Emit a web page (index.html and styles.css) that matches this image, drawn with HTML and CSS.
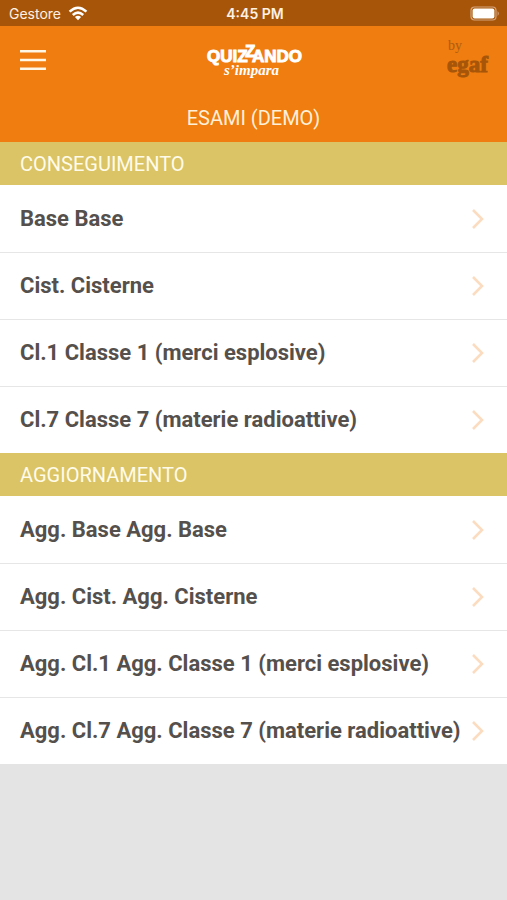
FILE: index.html
```html
<!DOCTYPE html>
<html lang="it">
<head>
<meta charset="utf-8">
<meta name="viewport" content="width=device-width, initial-scale=1">
<title>Quizzando - Esami (demo)</title>
<link rel="stylesheet" href="styles.css">
</head>
<body>
<svg class="defs" width="0" height="0" aria-hidden="true">
  <symbol id="chevron" viewBox="0 0 14 22"><path d="M2 2 L11 11 L2 20" fill="none" stroke="currentColor" stroke-width="2.6"/></symbol>
</svg>
<div class="status">
  <div class="carrier">
    <span>Gestore</span>
    <svg width="20" height="15" viewBox="0 0 20 15" aria-hidden="true">
      <g fill="none" stroke="#fff" stroke-width="2.5">
        <path d="M1.6 5.6 Q10 -2.2 18.4 5.6"/>
        <path d="M4.8 9 Q10 4.2 15.2 9"/>
      </g>
      <path d="M6.9 11 Q10 8.4 13.1 11 L10 14.2 Z" fill="#fff"/>
    </svg>
  </div>
  <span class="clock">4:45 PM</span>
  <svg class="battery" width="31" height="15" viewBox="0 0 31 15" aria-hidden="true">
    <rect x="1" y="1" width="25" height="13" rx="3.5" fill="none" stroke="#d6a47c" stroke-width="1.2"/>
    <rect x="2.6" y="2.6" width="21.8" height="9.8" rx="2" fill="#fff"/>
    <path d="M27.6 5 Q30 7.5 27.6 10 Z" fill="#d6a47c"/>
  </svg>
</div>
<header class="header">
  <div class="bar">
    <button class="menu" type="button" aria-label="Menu">
      <svg width="26" height="22" viewBox="0 0 26 22" aria-hidden="true"><path d="M0 2.3H26M0 11H26M0 19.7H26" stroke="#fff6e4" stroke-width="2.6"/></svg>
    </button>
    <svg class="logo" width="98" height="40" viewBox="0 0 98 40" role="img" aria-label="Quizzando s'impara">
      <g class="logo-name">
        <text x="1" y="22">QUIZ</text>
        <text x="39" y="17">Z</text>
        <text x="46" y="22">ANDO</text>
      </g>
      <text class="logo-tag" x="18" y="35">s’impara</text>
    </svg>
    <svg class="brand" width="42" height="44" viewBox="0 0 42 44" role="img" aria-label="by egaf">
      <text class="brand-by" x="1" y="12">by</text>
      <text class="brand-name" x="0" y="34">egaf</text>
    </svg>
  </div>
  <h1 class="title">ESAMI (DEMO)</h1>
</header>
<main>
  <section>
    <h2 class="group">CONSEGUIMENTO</h2>
    <ul class="list">
      <li><a class="row" href="#"><span>Base Base</span><svg class="chevron" aria-hidden="true"><use href="#chevron"/></svg></a></li>
      <li><a class="row" href="#"><span>Cist. Cisterne</span><svg class="chevron" aria-hidden="true"><use href="#chevron"/></svg></a></li>
      <li><a class="row" href="#"><span>Cl.1 Classe 1 (merci esplosive)</span><svg class="chevron" aria-hidden="true"><use href="#chevron"/></svg></a></li>
      <li><a class="row" href="#"><span>Cl.7 Classe 7 (materie radioattive)</span><svg class="chevron" aria-hidden="true"><use href="#chevron"/></svg></a></li>
    </ul>
  </section>
  <section>
    <h2 class="group">AGGIORNAMENTO</h2>
    <ul class="list">
      <li><a class="row" href="#"><span>Agg. Base Agg. Base</span><svg class="chevron" aria-hidden="true"><use href="#chevron"/></svg></a></li>
      <li><a class="row" href="#"><span>Agg. Cist. Agg. Cisterne</span><svg class="chevron" aria-hidden="true"><use href="#chevron"/></svg></a></li>
      <li><a class="row" href="#"><span>Agg. Cl.1 Agg. Classe 1 (merci esplosive)</span><svg class="chevron" aria-hidden="true"><use href="#chevron"/></svg></a></li>
      <li><a class="row" href="#"><span>Agg. Cl.7 Agg. Classe 7 (materie radioattive)</span><svg class="chevron" aria-hidden="true"><use href="#chevron"/></svg></a></li>
    </ul>
  </section>
</main>
</body>
</html>
```
FILE: styles.css
```css
* { box-sizing: border-box; }
body {
  margin: 0;
  background: #e4e4e4;
  font-family: Roboto, "Liberation Sans", sans-serif;
}
.defs { display: block; }
.status {
  display: grid;
  grid-template-columns: 1fr auto 1fr;
  align-items: center;
  height: 26px;
  padding: 1px 6px 0 9px;
  background: #a75609;
  color: #fdf1e4;
  font: 14px/20px Inter, sans-serif;
}
.carrier { display: flex; align-items: center; gap: 7px; }
.clock { font-weight: 600; }
.battery { justify-self: end; }
.header { background: #ef7d10; }
.bar {
  display: grid;
  grid-template-columns: 1fr auto 1fr;
  align-items: center;
  height: 67px;
  padding: 0 18px 0 20px;
}
.menu {
  display: flex;
  justify-self: start;
  padding: 0;
  border: 0;
  background: none;
}
.brand { justify-self: end; overflow: visible; }
.logo { overflow: visible; }
.logo-name {
  font: bold 17px "Liberation Sans", sans-serif;
  fill: #fff;
  stroke: #fff;
  stroke-width: 1px;
}
.logo-tag {
  font: italic bold 15px "Liberation Serif", serif;
  fill: #fff;
}
.brand-by { font: 14px "Liberation Serif", serif; fill: #ad5c10; }
.brand-name {
  font: bold 23px "Liberation Serif", serif;
  fill: #a75609;
  stroke: #a75609;
  stroke-width: 1px;
}
.title {
  height: 49px;
  margin: 0;
  color: #fff0d8;
  font-size: 20px;
  font-weight: 400;
  line-height: 51px;
  text-align: center;
}
.group {
  height: 43px;
  margin: 0;
  padding: 0 20px;
  background: #dac465;
  color: #fffbea;
  font-size: 20px;
  font-weight: 400;
  line-height: 45px;
}
.list { margin: 0; padding: 0; list-style: none; background: #fff; }
.list li + li { border-top: 1px solid #e6e6e6; }
.row {
  display: flex;
  align-items: center;
  justify-content: space-between;
  gap: 8px;
  min-height: 66px;
  padding: 0 22px 0 20px;
  color: #55504c;
  font-size: 22px;
  font-weight: 700;
  line-height: 26px;
  text-decoration: none;
}
.list li:first-child .row { min-height: 67px; }
.chevron { flex: none; width: 14px; height: 22px; color: #fbdcc0; }
```
